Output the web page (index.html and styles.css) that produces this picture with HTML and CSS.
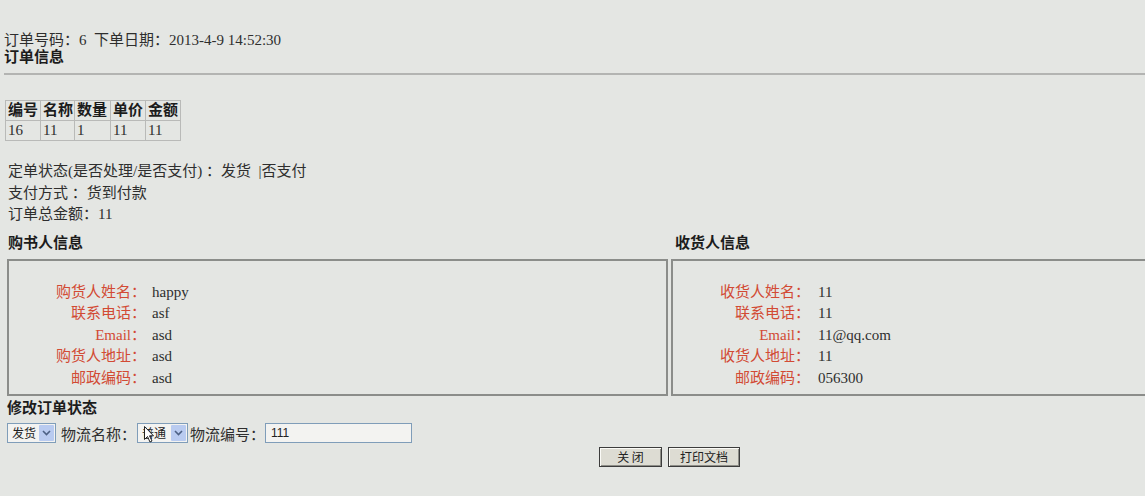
FILE: index.html
```html
<!DOCTYPE html>
<html lang="zh-CN">
<head>
<meta charset="utf-8">
<title>订单详情</title>
<link rel="stylesheet" href="styles.css">
</head>
<body>
<div class="page">
  <div class="top">
    <p class="meta">订单号码：6&nbsp;&nbsp;下单日期：2013-4-9 14:52:30</p>
    <h3 class="title">订单信息</h3>
  </div>
  <hr class="rule">
  <table class="items">
    <thead>
      <tr><th class="c1">编号</th><th class="c2">名称</th><th class="c3">数量</th><th class="c4">单价</th><th class="c5">金额</th></tr>
    </thead>
    <tbody>
      <tr><td>16</td><td>11</td><td>1</td><td>11</td><td>11</td></tr>
    </tbody>
  </table>
  <div class="summary">
    <p>定单状态(是否处理/是否支付) ：发货 &nbsp;|否支付</p>
    <p>支付方式 ：货到付款</p>
    <p>订单总金额：11</p>
  </div>
  <div class="parties">
    <section class="party">
      <h4 class="party-title">购书人信息</h4>
      <div class="box">
        <div class="field"><span class="label">购货人姓名：</span><span class="value">happy</span></div>
        <div class="field"><span class="label">联系电话：</span><span class="value">asf</span></div>
        <div class="field"><span class="label">Email：</span><span class="value">asd</span></div>
        <div class="field"><span class="label">购货人地址：</span><span class="value">asd</span></div>
        <div class="field"><span class="label">邮政编码：</span><span class="value">asd</span></div>
      </div>
    </section>
    <section class="party party-right">
      <h4 class="party-title">收货人信息</h4>
      <div class="box">
        <div class="field"><span class="label">收货人姓名：</span><span class="value">11</span></div>
        <div class="field"><span class="label">联系电话：</span><span class="value">11</span></div>
        <div class="field"><span class="label">Email：</span><span class="value">11@qq.com</span></div>
        <div class="field"><span class="label">收货人地址：</span><span class="value">11</span></div>
        <div class="field"><span class="label">邮政编码：</span><span class="value">056300</span></div>
      </div>
    </section>
  </div>
  <h4 class="edit-title">修改订单状态</h4>
  <div class="controls">
    <span class="select sel-status"><span class="sel-val">发货</span><span class="sel-btn"><svg width="9" height="6" viewBox="0 0 9 6"><path d="M1 1 L4.5 4.5 L8 1" fill="none" stroke="#4d6185" stroke-width="1.6"/></svg></span></span>
    <span class="ctl-label">物流名称：</span>
    <span class="select sel-ship"><span class="sel-val">普通</span><span class="sel-btn"><svg width="9" height="6" viewBox="0 0 9 6"><path d="M1 1 L4.5 4.5 L8 1" fill="none" stroke="#4d6185" stroke-width="1.6"/></svg></span>
      <svg class="cursor" width="11" height="17" viewBox="0 0 11 17"><path d="M0.5 0.5 L0.5 13.5 L3.5 10.5 L6 16 L8 15 L5.5 9.8 L9.5 9.8 Z" fill="#fff" stroke="#222" stroke-width="1"/></svg>
    </span>
    <span class="ctl-label ctl-label-2">物流编号：</span>
    <input class="text-input" type="text" value="111">
  </div>
  <div class="actions">
    <button class="btn btn-close" type="button">关 闭</button>
    <button class="btn btn-print" type="button">打印文档</button>
  </div>
</div>
</body>
</html>
```

FILE: styles.css
```css
html, body {
  margin: 0;
  padding: 0;
  overflow: hidden;
  background: #e4e6e3;
}

body {
  font-family: "Liberation Serif", "Noto Sans CJK SC", serif;
  font-size: 15px;
  color: #2e2e2e;
}

.page {
  width: 1339px;
  padding-top: 32px;
}

.top {
  padding-left: 4px;
}

.meta {
  margin: 0;
  line-height: 17px;
}

.title {
  margin: 0;
  font-size: 15px;
  line-height: 17px;
  font-weight: bold;
  color: #1c1c1c;
}

.rule {
  margin: 7px 0 25px 4px;
  border: 0;
  height: 2px;
  background: #b3b4b2;
}

.items {
  margin-left: 5px;
  border-collapse: collapse;
  table-layout: fixed;
  border: 1px solid #a9aaa8;
}

.items th,
.items td {
  border: 1px solid #b9bab8;
  padding: 0 1px 0 2px;
  height: 19px;
  line-height: 19px;
  text-align: left;
}

.items th {
  font-size: 15px;
  font-weight: bold;
  color: #1c1c1c;
}

.items .c1 { width: 31px; }
.items .c2 { width: 30px; }
.items .c3 { width: 32px; }
.items .c4 { width: 31px; }
.items .c5 { width: 31px; }

.summary {
  margin-top: 20px;
  padding-left: 8px;
}

.summary p {
  margin: 0;
  line-height: 21.5px;
}

.parties {
  display: grid;
  grid-template-columns: 661px 661px;
  column-gap: 3px;
  margin: 8px 0 0 7px;
}

.party-title {
  margin: 0 0 7px;
  padding-left: 1px;
  font-size: 15px;
  line-height: 18px;
  font-weight: bold;
  color: #1c1c1c;
}

.party-right .party-title {
  padding-left: 4px;
}

.box {
  border: 2px solid #8b8d8a;
  padding: 21px 0 5px;
}

.field {
  display: grid;
  grid-template-columns: 137px 1fr;
  column-gap: 6px;
  line-height: 21.5px;
}

.party-right .field {
  column-gap: 8px;
}

.label {
  text-align: right;
  color: #d24a34;
}

.value {
  color: #2e2e2e;
}

.edit-title {
  margin: 3px 0 0 7px;
  font-size: 15px;
  line-height: 18px;
  font-weight: bold;
  color: #1c1c1c;
}

.controls {
  display: flex;
  align-items: center;
  margin: 6px 0 0 7px;
  height: 20px;
}

.select {
  position: relative;
  display: inline-flex;
  align-items: stretch;
  height: 20px;
  box-sizing: border-box;
  border: 1px solid #7f9db9;
  background: #f3f3f1;
}

.sel-status { width: 49px; }
.sel-ship { width: 51px; margin-left: 1px; }

.sel-val {
  flex: 1;
  padding-left: 4px;
  font-family: "Noto Sans CJK SC", sans-serif;
  font-size: 12px;
  line-height: 18px;
  color: #222;
}

.sel-btn {
  width: 15px;
  margin: 1px;
  display: flex;
  align-items: center;
  justify-content: center;
  background: #b9cbf0;
  border-radius: 1px;
}

.cursor {
  position: absolute;
  left: 6px;
  top: 2px;
}

.ctl-label {
  margin-left: 5px;
  white-space: nowrap;
}

.ctl-label-2 {
  margin-left: 2px;
}

.text-input {
  width: 147px;
  height: 20px;
  box-sizing: border-box;
  margin: 0;
  padding: 0 5px;
  border: 1px solid #7f9db9;
  background: #f3f3f1;
  font-family: "Liberation Sans", Arial, sans-serif;
  font-size: 12px;
  color: #222;
}

.actions {
  display: flex;
  justify-content: center;
  gap: 6px;
  margin-top: 4px;
}

.btn {
  height: 20px;
  box-sizing: border-box;
  padding: 0;
  border: 1px solid #3c3c3c;
  background: #dddcd3;
  box-shadow: inset 1px 1px 0 #fbfbf7, inset -1px -1px 0 #8e8e88;
  font-family: "Noto Sans CJK SC", sans-serif;
  font-size: 12px;
  line-height: 18px;
  color: #222;
}

.btn-close { width: 63px; }
.btn-print { width: 72px; }
```
